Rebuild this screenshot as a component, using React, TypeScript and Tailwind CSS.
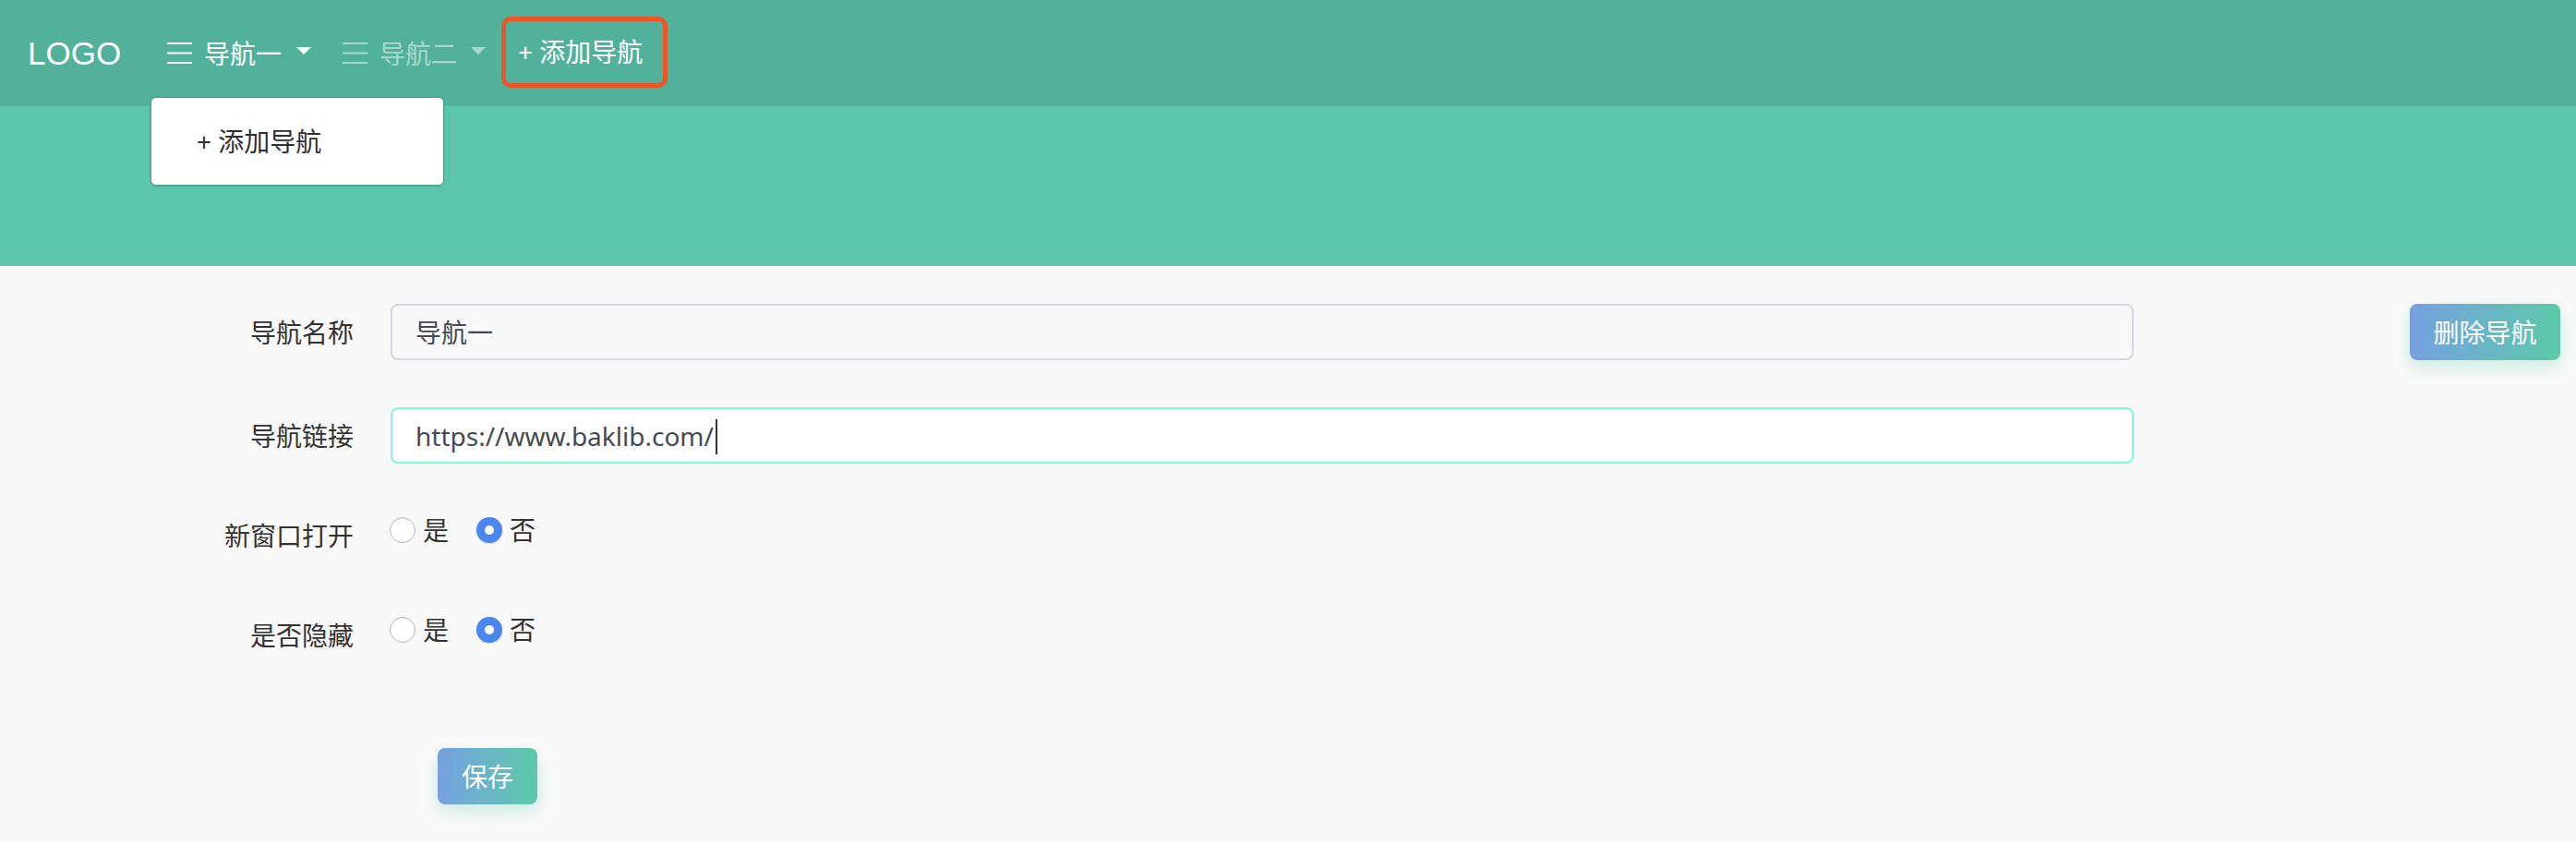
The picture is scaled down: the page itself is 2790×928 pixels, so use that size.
import React from "react";

const sans = "font-['Noto_Sans','Noto_Sans_CJK_SC',sans-serif]";

function MenuIcon({ faded }: { faded?: boolean }) {
  return (
    <svg
      width="27"
      height="24"
      viewBox="0 0 27 24"
      className={faded ? "opacity-50" : ""}
    >
      <rect x="0" y="0" width="27" height="2" fill="#fff" />
      <rect x="0" y="10.5" width="27" height="2" fill="#fff" />
      <rect x="0" y="21" width="27" height="2" fill="#fff" />
    </svg>
  );
}

function Caret({ faded }: { faded?: boolean }) {
  return (
    <svg
      width="16"
      height="8"
      viewBox="0 0 16 8"
      className={faded ? "opacity-50 -mt-[6px]" : "-mt-[6px]"}
    >
      <polygon points="0,0 16,0 8,8" fill="#fff" />
    </svg>
  );
}

function Radio({ checked, label }: { checked?: boolean; label: string }) {
  return (
    <div className="flex items-center">
      {checked ? (
        <span className="flex h-[28px] w-[28px] items-center justify-center rounded-full bg-[#4b87ef] shadow-[0_1px_2px_rgba(0,0,0,0.15)]">
          <span className="h-[10px] w-[10px] rounded-full bg-white" />
        </span>
      ) : (
        <span className="h-[28px] w-[28px] rounded-full border-[1.5px] border-[#b9b9b9] bg-white shadow-[inset_0_1px_2px_rgba(0,0,0,0.08)]" />
      )}
      <span className="ml-[8px] text-[28px] leading-none text-[#333]">
        {label}
      </span>
    </div>
  );
}

function FormLabel({ children, low }: { children: string; low?: boolean }) {
  return (
    <div
      className={
        low
          ? "mt-[12px] w-[140px] text-right text-[28px] leading-none text-[#333]"
          : "w-[140px] text-right text-[28px] leading-none text-[#333]"
      }
    >
      {children}
    </div>
  );
}

export default function App() {
  return (
    <div className={`h-[928px] w-[2790px] bg-white ${sans}`}>
      <header className="relative">
        <div className="flex h-[115px] items-center bg-[#52b19a] text-white">
          <span className="ml-[30px] w-[104px] font-['Liberation_Sans',sans-serif] text-[35px] leading-none">
            LOGO
          </span>

          <div className="ml-[47px] flex items-center">
            <MenuIcon />
            <span className="ml-[13px] text-[28px] leading-none">导航一</span>
            <span className="ml-[16px] flex">
              <Caret />
            </span>
          </div>

          <div className="ml-[34px] flex items-center text-white/50">
            <MenuIcon faded />
            <span className="ml-[13px] text-[28px] leading-none">导航二</span>
            <span className="ml-[15px] flex">
              <Caret faded />
            </span>
          </div>

          <div className="ml-[17px] -mt-[3px] flex h-[77px] items-center rounded-[10px] border-[5px] border-[#ee5527] pl-[13px] pr-[22px]">
            <span className="text-[28px] leading-none">+ 添加导航</span>
          </div>
        </div>
        <div className="h-[173px] bg-[#5bc6ab]" />

        <div className="absolute left-[163px] top-[105px] flex h-[96px] w-[318px] items-center rounded-[6px] border border-[#4c9d88] bg-white pl-[49px] shadow-[0_1px_3px_rgba(0,0,0,0.12)]">
          <span className="text-[28px] leading-none text-[#2f2f2f]">
            + 添加导航
          </span>
        </div>
      </header>

      <main className="flex h-[624px] bg-[#f9f9f9]">
        <div className="flex flex-col pl-[243px] pt-[41px]">
          <div className="flex h-[61px] items-center">
            <FormLabel>导航名称</FormLabel>
            <div className="ml-[40px] flex h-[61px] w-[1888px] items-center rounded-[8px] border-2 border-[#d4d7dd] bg-[#f9f9f9] pl-[25px]">
              <span className="text-[28px] leading-none text-[#454a52]">
                导航一
              </span>
            </div>
          </div>

          <div className="mt-[51px] flex h-[61px] items-center">
            <FormLabel>导航链接</FormLabel>
            <div className="ml-[40px] flex h-[61px] w-[1888px] items-center rounded-[8px] border-2 border-[#80f7dd] bg-white pl-[25px]">
              <span className="text-[28px] leading-none text-[#454a52]">
                https://www.baklib.com/
              </span>
              <span className="ml-[2px] mt-[2px] h-[38px] w-[2px] bg-[#333]" />
            </div>
          </div>

          <div className="mt-[41px] flex h-[61px] items-center">
            <FormLabel low>新窗口打开</FormLabel>
            <div className="ml-[39px] flex items-center gap-[30px]">
              <Radio label="是" />
              <Radio checked label="否" />
            </div>
          </div>

          <div className="mt-[47px] flex h-[61px] items-center">
            <FormLabel low>是否隐藏</FormLabel>
            <div className="ml-[39px] flex items-center gap-[30px]">
              <Radio label="是" />
              <Radio checked label="否" />
            </div>
          </div>

          <div className="mt-[98px] pl-[231px]">
            <button className="flex h-[61px] w-[108px] items-center justify-center rounded-[8px] bg-gradient-to-r from-[#75a0e1] to-[#5cc9a8] text-[28px] leading-none text-white shadow-[0_8px_18px_rgba(92,201,168,0.28)]">
              保存
            </button>
          </div>
        </div>

        <div className="ml-auto mr-[17px] pt-[41px]">
          <button className="flex h-[61px] w-[163px] items-center justify-center rounded-[8px] bg-gradient-to-r from-[#75a0e1] to-[#5cc9a8] text-[28px] leading-none text-white shadow-[0_8px_18px_rgba(92,201,168,0.28)]">
            删除导航
          </button>
        </div>
      </main>
    </div>
  );
}
